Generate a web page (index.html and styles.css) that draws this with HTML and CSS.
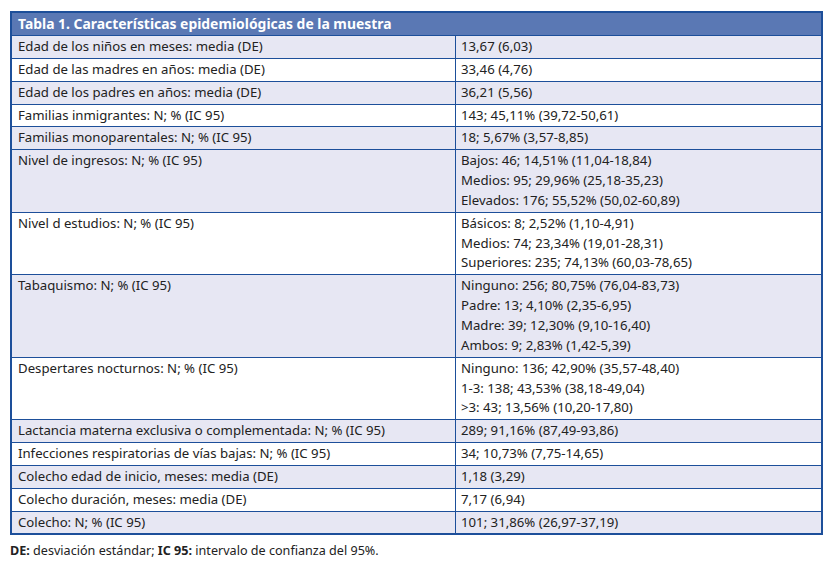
FILE: index.html
```html
<!DOCTYPE html>
<html lang="es">
<head>
<meta charset="utf-8">
<title>Tabla 1</title>
<link rel="stylesheet" href="styles.css">
</head>
<body>
<table class="data">
  <thead>
    <tr><th colspan="2">Tabla 1. Características epidemiológicas de la muestra</th></tr>
  </thead>
  <tbody>
    <tr class="alt"><td class="label">Edad de los niños en meses: media (DE)</td><td>13,67 (6,03)</td></tr>
    <tr><td class="label">Edad de las madres en años: media (DE)</td><td>33,46 (4,76)</td></tr>
    <tr class="alt"><td class="label">Edad de los padres en años: media (DE)</td><td>36,21 (5,56)</td></tr>
    <tr><td class="label">Familias inmigrantes: N; % (IC 95)</td><td>143; 45,11% (39,72-50,61)</td></tr>
    <tr class="alt"><td class="label">Familias monoparentales: N; % (IC 95)</td><td>18; 5,67% (3,57-8,85)</td></tr>
    <tr class="alt"><td class="label">Nivel de ingresos: N; % (IC 95)</td><td>Bajos: 46; 14,51% (11,04-18,84)<br>Medios: 95; 29,96% (25,18-35,23)<br>Elevados: 176; 55,52% (50,02-60,89)</td></tr>
    <tr><td class="label">Nivel d estudios: N; % (IC 95)</td><td>Básicos: 8; 2,52% (1,10-4,91)<br>Medios: 74; 23,34% (19,01-28,31)<br>Superiores: 235; 74,13% (60,03-78,65)</td></tr>
    <tr class="alt"><td class="label">Tabaquismo: N; % (IC 95)</td><td>Ninguno: 256; 80,75% (76,04-83,73)<br>Padre: 13; 4,10% (2,35-6,95)<br>Madre: 39; 12,30% (9,10-16,40)<br>Ambos: 9; 2,83% (1,42-5,39)</td></tr>
    <tr><td class="label">Despertares nocturnos: N; % (IC 95)</td><td>Ninguno: 136; 42,90% (35,57-48,40)<br>1-3: 138; 43,53% (38,18-49,04)<br>&gt;3: 43; 13,56% (10,20-17,80)</td></tr>
    <tr class="alt"><td class="label">Lactancia materna exclusiva o complementada: N; % (IC 95)</td><td>289; 91,16% (87,49-93,86)</td></tr>
    <tr><td class="label">Infecciones respiratorias de vías bajas: N; % (IC 95)</td><td>34; 10,73% (7,75-14,65)</td></tr>
    <tr class="alt"><td class="label">Colecho edad de inicio, meses: media (DE)</td><td>1,18 (3,29)</td></tr>
    <tr><td class="label">Colecho duración, meses: media (DE)</td><td>7,17 (6,94)</td></tr>
    <tr class="alt"><td class="label">Colecho: N; % (IC 95)</td><td>101; 31,86% (26,97-37,19)</td></tr>
  </tbody>
</table>
<p class="note"><b>DE:</b> desviación estándar; <b>IC 95:</b> intervalo de confianza del 95%.</p>
</body>
</html>
```
FILE: styles.css
```css
html, body {
  margin: 0;
  padding: 0;
  background: #ffffff;
}
body {
  padding: 11px 11px 0 10px;
  font-family: "Noto Sans", Lato, sans-serif;
  font-size: 13.2px;
  color: #222222;
}
.data {
  width: 813px;
  border-collapse: collapse;
  border: 2px solid #1d4f9a;
}
.data th {
  background: #5a78b4;
  color: #ffffff;
  text-align: left;
  font-weight: bold;
  font-size: 13.9px;
  line-height: 20px;
  padding: 1px 6px 1px 6px;
  border-bottom: 1px solid #1d4f9a;
}
.data td {
  line-height: 19.85px;
  padding: 1px 5px 1px 5px;
  vertical-align: top;
  border-top: 1px solid #1d4f9a;
  border-bottom: 1px solid #1d4f9a;
}
.data td.label {
  width: 432px;
  padding-left: 6px;
  border-right: 1px solid #1d4f9a;
}
.data tr.alt td {
  background: #e7e7f3;
}
.note {
  margin: 7px 0 0 0;
  font-size: 12.6px;
  line-height: 18px;
}
.note b {
  font-weight: bold;
}
```
